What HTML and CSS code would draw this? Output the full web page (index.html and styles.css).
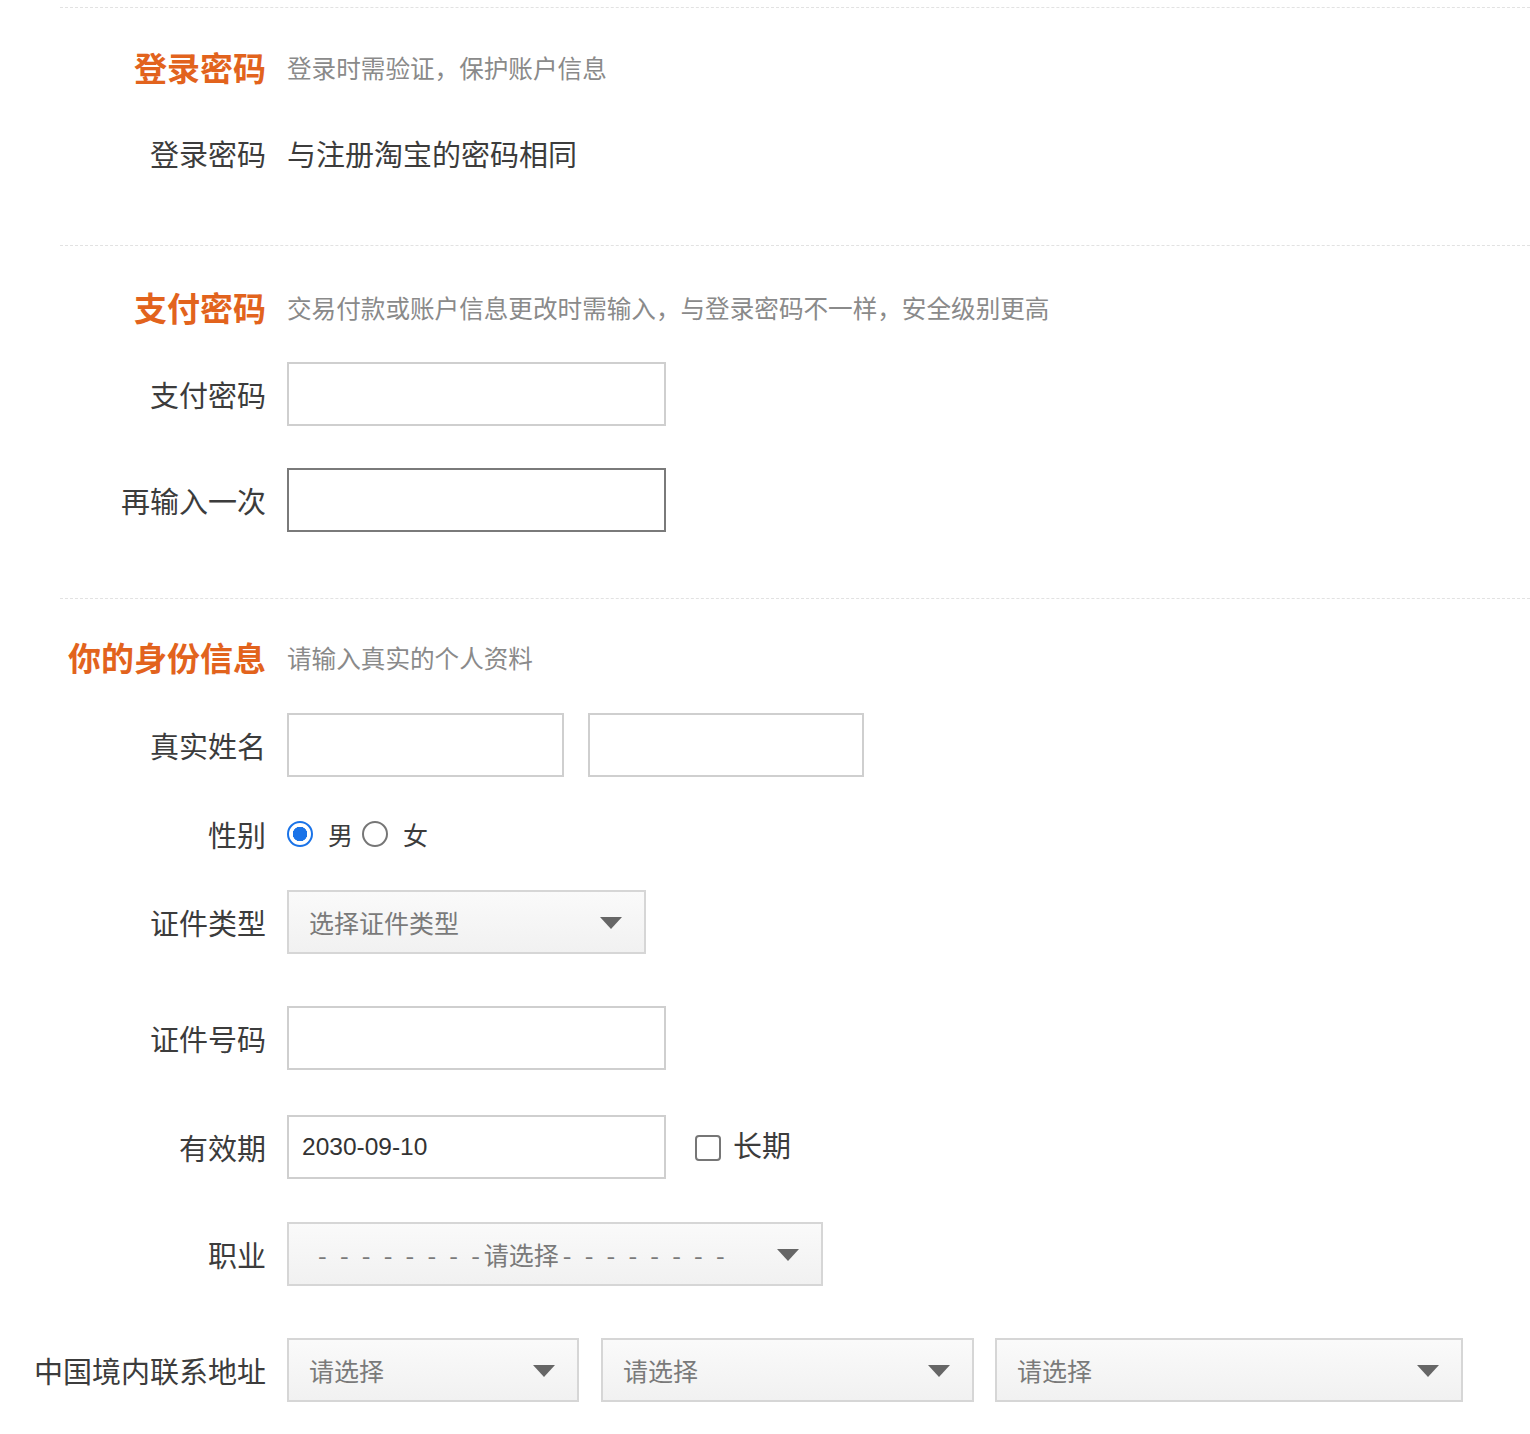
FILE: index.html
```html
<!DOCTYPE html>
<html lang="zh-CN">
<head>
<meta charset="utf-8">
<title>账户设置</title>
<link rel="stylesheet" href="styles.css">
</head>
<body>
<div class="page">
  <div class="divider d1"></div>
  <div class="row title-row t1">
    <div class="label sec-title">登录密码</div>
    <div class="sec-sub">登录时需验证，保护账户信息</div>
  </div>
  <div class="row text-row r-login">
    <div class="label">登录密码</div>
    <div class="plain">与注册淘宝的密码相同</div>
  </div>

  <div class="divider d2"></div>
  <div class="row title-row t2">
    <div class="label sec-title">支付密码</div>
    <div class="sec-sub">交易付款或账户信息更改时需输入，与登录密码不一样，安全级别更高</div>
  </div>
  <div class="row field-row r-pay">
    <div class="label">支付密码</div>
    <div class="input w378"></div>
  </div>
  <div class="row field-row r-pay2">
    <div class="label">再输入一次</div>
    <div class="input w378 focus"></div>
  </div>

  <div class="divider d3"></div>
  <div class="row title-row t3">
    <div class="label sec-title">你的身份信息</div>
    <div class="sec-sub">请输入真实的个人资料</div>
  </div>
  <div class="row field-row r-name">
    <div class="label">真实姓名</div>
    <div class="input w276"></div>
    <div class="input w275 ml24"></div>
  </div>
  <div class="row text-row r-gender">
    <div class="label">性别</div>
    <span class="radio checked"></span>
    <span class="opt">男</span>
    <span class="radio"></span>
    <span class="opt">女</span>
  </div>
  <div class="row field-row r-idtype">
    <div class="label">证件类型</div>
    <div class="select w358"><span class="sel-text">选择证件类型</span><span class="arrow"></span></div>
  </div>
  <div class="row field-row r-idno">
    <div class="label">证件号码</div>
    <div class="input w378"></div>
  </div>
  <div class="row field-row r-date">
    <div class="label">有效期</div>
    <div class="input w378"><span class="val">2030-09-10</span></div>
    <span class="checkbox"></span>
    <span class="opt long">长期</span>
  </div>
  <div class="row field-row r-job">
    <div class="label">职业</div>
    <div class="select w535 job"><span class="sel-text dashes">- - - - - - - -<span class="mid">请选择</span>- - - - - - - -</span><span class="arrow"></span></div>
  </div>
  <div class="row field-row r-addr">
    <div class="label">中国境内联系地址</div>
    <div class="select w291"><span class="sel-text">请选择</span><span class="arrow"></span></div>
    <div class="select w372 ml22"><span class="sel-text">请选择</span><span class="arrow"></span></div>
    <div class="select w467 ml21"><span class="sel-text">请选择</span><span class="arrow"></span></div>
  </div>
</div>
</body>
</html>
```

FILE: styles.css
```css
html, body {
  margin: 0;
  padding: 0;
  background: #fff;
}
body {
  font-family: "Noto Sans CJK SC", "Noto Sans", sans-serif;
  color: #3a3a3a;
}
.page {
  width: 1530px;
  padding-bottom: 32px;
}
.divider {
  margin-left: 60px;
  border-top: 1px dashed #e2e2e2;
}
.d1 { margin-top: 7px; }
.d2 { margin-top: 72px; }
.d3 { margin-top: 66px; }

.row {
  display: flex;
  align-items: center;
}
.label {
  width: 266px;
  flex: none;
  margin-right: 21px;
  text-align: right;
  font-size: 29px;
  line-height: 40px;
  color: #3c3c3c;
  white-space: nowrap;
}
.title-row { height: 40px; }
.text-row { height: 40px; }
.field-row { height: 64px; }

.t1 { margin-top: 39px; }
.r-login { margin-top: 46px; }
.t2 { margin-top: 41px; }
.r-pay { margin-top: 35px; }
.r-pay2 { margin-top: 42px; }
.t3 { margin-top: 38px; }
.r-name { margin-top: 36px; }
.r-gender { margin-top: 37px; }
.r-idtype { margin-top: 36px; }
.r-idno { margin-top: 52px; }
.r-date { margin-top: 45px; }
.r-job { margin-top: 43px; }
.r-addr { margin-top: 52px; }

.sec-title {
  font-size: 33px;
  font-weight: 700;
  color: #e2631d;
}
.sec-sub {
  font-size: 24.6px;
  color: #8a8a8a;
  white-space: nowrap;
}
.plain {
  font-size: 29px;
  color: #3c3c3c;
}

.input {
  box-sizing: border-box;
  height: 64px;
  border: 2px solid #cfcfcf;
  background: #fff;
  display: flex;
  align-items: center;
  padding-left: 13px;
}
.input.focus { border-color: #7a7a7a; }
.w378 { width: 379px; }
.w276 { width: 277px; }
.w275 { width: 276px; }
.w358 { width: 359px; }
.w535 { width: 536px; }
.w291 { width: 292px; }
.w372 { width: 373px; }
.w467 { width: 468px; }
.ml24 { margin-left: 24px; }
.ml22 { margin-left: 22px; }
.ml21 { margin-left: 21px; }

.val {
  font-family: "Liberation Sans", "DejaVu Sans", sans-serif;
  font-size: 24.5px;
  color: #333;
}

.select {
  box-sizing: border-box;
  height: 64px;
  border: 2px solid #d6d6d6;
  background: linear-gradient(#fafafa, #f1f1f1);
  display: flex;
  align-items: center;
  justify-content: space-between;
  padding: 0 22px 0 20px;
}
.sel-text {
  font-size: 25px;
  color: #7a7a7a;
  white-space: nowrap;
}
.job { padding-left: 29px; }
.dashes {
  word-spacing: 7.6px;
}
.mid {
  margin: 0 4px;
}
.arrow {
  width: 0;
  height: 0;
  border-left: 11px solid transparent;
  border-right: 11px solid transparent;
  border-top: 12px solid #666;
  margin-top: 2px;
}

.radio {
  box-sizing: border-box;
  width: 26px;
  height: 26px;
  border-radius: 50%;
  border: 2px solid #767676;
  background: #fff;
  flex: none;
}
.radio.checked {
  border: 2px solid #1a73e8;
  background: radial-gradient(circle, #1a73e8 0 7px, #fff 7.5px);
}
.opt {
  font-size: 25px;
  color: #3c3c3c;
  margin-left: 15px;
  margin-right: 9px;
  line-height: 40px;
}
.checkbox {
  box-sizing: border-box;
  width: 26px;
  height: 26px;
  border: 2px solid #767676;
  border-radius: 4px;
  margin-left: 29px;
  margin-top: 2px;
  flex: none;
}
.opt.long {
  font-size: 29px;
  margin-left: 12px;
  margin-top: -6px;
}
```
